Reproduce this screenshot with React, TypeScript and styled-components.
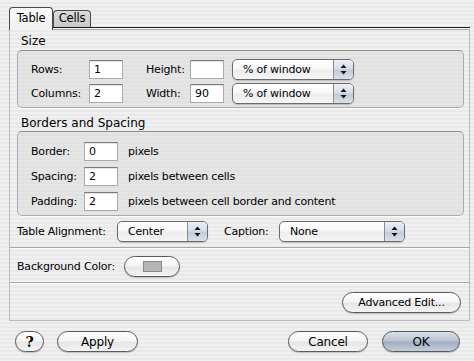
import styled, { createGlobalStyle } from "styled-components";

const GlobalStyle = createGlobalStyle`
  html, body {
    margin: 0;
    padding: 0;
  }
  body {
    font-family: "DejaVu Sans", "Liberation Sans", sans-serif;
    font-size: 11px;
    color: #000;
  }
`;

const pinstripe =
  "repeating-linear-gradient(to bottom, #f0f0f0 0px, #f0f0f0 2px, #e9e9e9 2px, #e9e9e9 4px)";

const Window = styled.div`
  width: 474px;
  height: 361px;
  background: ${pinstripe};
  overflow: hidden;
  display: flex;
  flex-direction: column;
  letter-spacing: -0.2px;
`;

const TabBar = styled.div`
  display: flex;
  align-items: flex-start;
  height: 30px;
  box-sizing: border-box;
  padding-top: 7px;
  margin: 0 4px 0 9px;
  background: linear-gradient(
    to bottom,
    transparent 27px,
    #1a1a1a 27px,
    #1a1a1a 28px,
    #f8f8f8 28px,
    #f8f8f8 29px,
    #a9a9a9 29px,
    #a9a9a9 30px
  );
`;

const Tab = styled.div<{ $active?: boolean; $w: number }>`
  width: ${(p) => p.$w}px;
  box-sizing: border-box;
  height: ${(p) => (p.$active ? 23 : 17)}px;
  margin-top: ${(p) => (p.$active ? 0 : 3)}px;
  border: 1px solid #4a4a4a;
  border-bottom: none;
  border-radius: 4px 4px 0 0;
  background: ${(p) =>
    p.$active
      ? "linear-gradient(to bottom, #fbfbfb, #f0f0f0)"
      : "linear-gradient(to bottom, #dadada, #c9c9c9)"};
  text-align: center;
  line-height: ${(p) => (p.$active ? 20 : 15)}px;
  font-size: 11.5px;
`;

const Pane = styled.div`
  margin: 0 4px 0 9px;
  height: 291px;
  box-sizing: border-box;
  border: 1px solid #bcbcbc;
  border-top: none;
  display: flex;
  flex-direction: column;
`;

const Header = styled.div<{ $top: number; $bottom: number }>`
  font-size: 12px;
  line-height: 16px;
  letter-spacing: 0;
  margin: ${(p) => p.$top}px 0 ${(p) => p.$bottom}px 11px;
`;

const Group = styled.div`
  margin: 0 5px 0 7px;
  border: 1px solid #acacac;
  border-top-color: #8e8e8e;
  border-radius: 5px;
  box-shadow: 0 1px 0 #fafafa;
  background: repeating-linear-gradient(
    to bottom,
    #e5e5e5 0px,
    #e5e5e5 2px,
    #e1e1e1 2px,
    #e1e1e1 4px
  );
`;

const SizeGrid = styled.div`
  display: grid;
  grid-template-columns: 58px 57px 44px 42px 122px;
  grid-auto-rows: 21px;
  row-gap: 3px;
  align-items: center;
  padding: 8px 0 3px 13px;
`;

const SpacingGrid = styled.div`
  display: grid;
  grid-template-columns: 53px 44px auto;
  grid-auto-rows: 19px;
  row-gap: 6px;
  align-items: center;
  padding: 10px 0 4px 13px;
`;

const Label = styled.span<{ $w?: number; $ml?: number }>`
  ${(p) => (p.$w ? `width: ${p.$w}px; flex: none;` : "")}
  margin-left: ${(p) => p.$ml ?? 0}px;
  white-space: nowrap;
`;

const Field = styled.input`
  width: 34px;
  height: 19px;
  box-sizing: border-box;
  border: 1px solid #aaaaaa;
  border-top-color: #7a7a7a;
  box-shadow: inset 0 1px 0 #e4e4e4;
  background: #fff;
  padding: 0 0 0 4px;
  margin: 0;
  font-family: "DejaVu Sans", "Liberation Sans", sans-serif;
  font-size: 11px;
  color: #000;
  outline: none;
`;

const SelectBox = styled.div<{ $w: number }>`
  width: ${(p) => p.$w}px;
  height: 21px;
  box-sizing: border-box;
  border: 1px solid #6c6c6c;
  border-radius: 5px;
  background: linear-gradient(
    to bottom,
    #ffffff 0%,
    #f7f7f7 45%,
    #ececec 55%,
    #f6f6f6 100%
  );
  box-shadow: 0 1px 1px rgba(0, 0, 0, 0.18);
  display: flex;
  align-items: center;
  overflow: hidden;
`;

const SelectText = styled.span`
  flex: 1;
  padding-left: 10px;
  white-space: nowrap;
`;

const ArrowCap = styled.div`
  width: 19px;
  align-self: stretch;
  border-left: 1px solid #8c8c8c;
  background: linear-gradient(
    to bottom,
    #edf1f5 0%,
    #d6dde6 45%,
    #c3ccd8 55%,
    #d8dfe8 100%
  );
  display: flex;
  align-items: center;
  justify-content: center;
`;

const Row = styled.div<{ $top: number }>`
  display: flex;
  align-items: center;
  height: 21px;
  margin: ${(p) => p.$top}px 0 0 7px;
`;

const Separator = styled.div<{ $top: number }>`
  height: 1px;
  margin-top: ${(p) => p.$top}px;
  background: #a6a6a6;
  box-shadow: 0 1px 0 #fbfbfb;
`;

const AdvancedRow = styled.div`
  display: flex;
  justify-content: flex-end;
  margin-top: 9px;
  padding-right: 8px;
`;

const Pill = styled.button<{
  $w: number;
  $default?: boolean;
  $size?: number;
  $ml?: number;
}>`
  width: ${(p) => p.$w}px;
  height: 21px;
  box-sizing: border-box;
  padding: 0;
  margin: 0 0 0 ${(p) => p.$ml ?? 0}px;
  border: 1px solid #5a5a5a;
  border-radius: 11px;
  background: ${(p) =>
    p.$default
      ? "linear-gradient(to bottom, #d9e0e8 0%, #b9c4d2 45%, #a1afc2 55%, #c3cdda 100%)"
      : "linear-gradient(to bottom, #ffffff 0%, #f5f5f5 45%, #e6e6e6 55%, #f4f4f4 100%)"};
  box-shadow: 0 1px 1px rgba(0, 0, 0, 0.2);
  font-family: "DejaVu Sans", "Liberation Sans", sans-serif;
  font-size: ${(p) => p.$size ?? 12}px;
  letter-spacing: -0.2px;
  color: #000;
  display: flex;
  align-items: center;
  justify-content: center;
`;

const HelpButton = styled(Pill)`
  font-family: "DejaVu Serif", "Liberation Serif", serif;
  font-weight: bold;
  font-size: 14px;
`;

const Swatch = styled.span`
  width: 19px;
  height: 11px;
  box-sizing: border-box;
  border: 1px solid #8a8a8a;
  background: #b4b4b4;
`;

const Footer = styled.div`
  display: flex;
  align-items: center;
  padding: 10px 14px 0 15px;
`;

const Grow = styled.div`
  flex: 1;
`;

function Arrows() {
  return (
    <svg width="7" height="11" viewBox="0 0 7 11">
      <path d="M3.5 0.5 L6.5 4 L0.5 4 Z" fill="#111" />
      <path d="M3.5 10.5 L6.5 7 L0.5 7 Z" fill="#111" />
    </svg>
  );
}

function Select({ w, value }: { w: number; value: string }) {
  return (
    <SelectBox $w={w}>
      <SelectText>{value}</SelectText>
      <ArrowCap>
        <Arrows />
      </ArrowCap>
    </SelectBox>
  );
}

export default function App() {
  return (
    <>
      <GlobalStyle />
      <Window>
        <TabBar>
          <Tab $active $w={44}>
            Table
          </Tab>
          <Tab $w={38}>Cells</Tab>
        </TabBar>
        <Pane>
          <Header $top={3} $bottom={1}>
            Size
          </Header>
          <Group>
            <SizeGrid>
              <Label>Rows:</Label>
              <Field defaultValue="1" />
              <Label>Height:</Label>
              <Field defaultValue="" />
              <Select w={122} value="% of window" />
              <Label>Columns:</Label>
              <Field defaultValue="2" />
              <Label>Width:</Label>
              <Field defaultValue="90" />
              <Select w={122} value="% of window" />
            </SizeGrid>
          </Group>
          <Header $top={7} $bottom={0}>
            Borders and Spacing
          </Header>
          <Group>
            <SpacingGrid>
              <Label>Border:</Label>
              <Field defaultValue="0" />
              <Label>pixels</Label>
              <Label>Spacing:</Label>
              <Field defaultValue="2" />
              <Label>pixels between cells</Label>
              <Label>Padding:</Label>
              <Field defaultValue="2" />
              <Label>pixels between cell border and content</Label>
            </SpacingGrid>
          </Group>
          <Row $top={5}>
            <Label $w={100}>Table Alignment:</Label>
            <Select w={91} value="Center" />
            <Label $w={55} $ml={16}>
              Caption:
            </Label>
            <Select w={126} value="None" />
          </Row>
          <Separator $top={5} />
          <Row $top={8}>
            <Label $w={107}>Background Color:</Label>
            <Pill $w={56}>
              <Swatch />
            </Pill>
          </Row>
          <Separator $top={5} />
          <AdvancedRow>
            <Pill $w={119} $size={11}>
              Advanced Edit...
            </Pill>
          </AdvancedRow>
        </Pane>
        <Footer>
          <HelpButton $w={29}>?</HelpButton>
          <Pill $w={81} $ml={13}>
            Apply
          </Pill>
          <Grow />
          <Pill $w={80}>Cancel</Pill>
          <Pill $w={78} $ml={14} $default>
            OK
          </Pill>
        </Footer>
      </Window>
    </>
  );
}
